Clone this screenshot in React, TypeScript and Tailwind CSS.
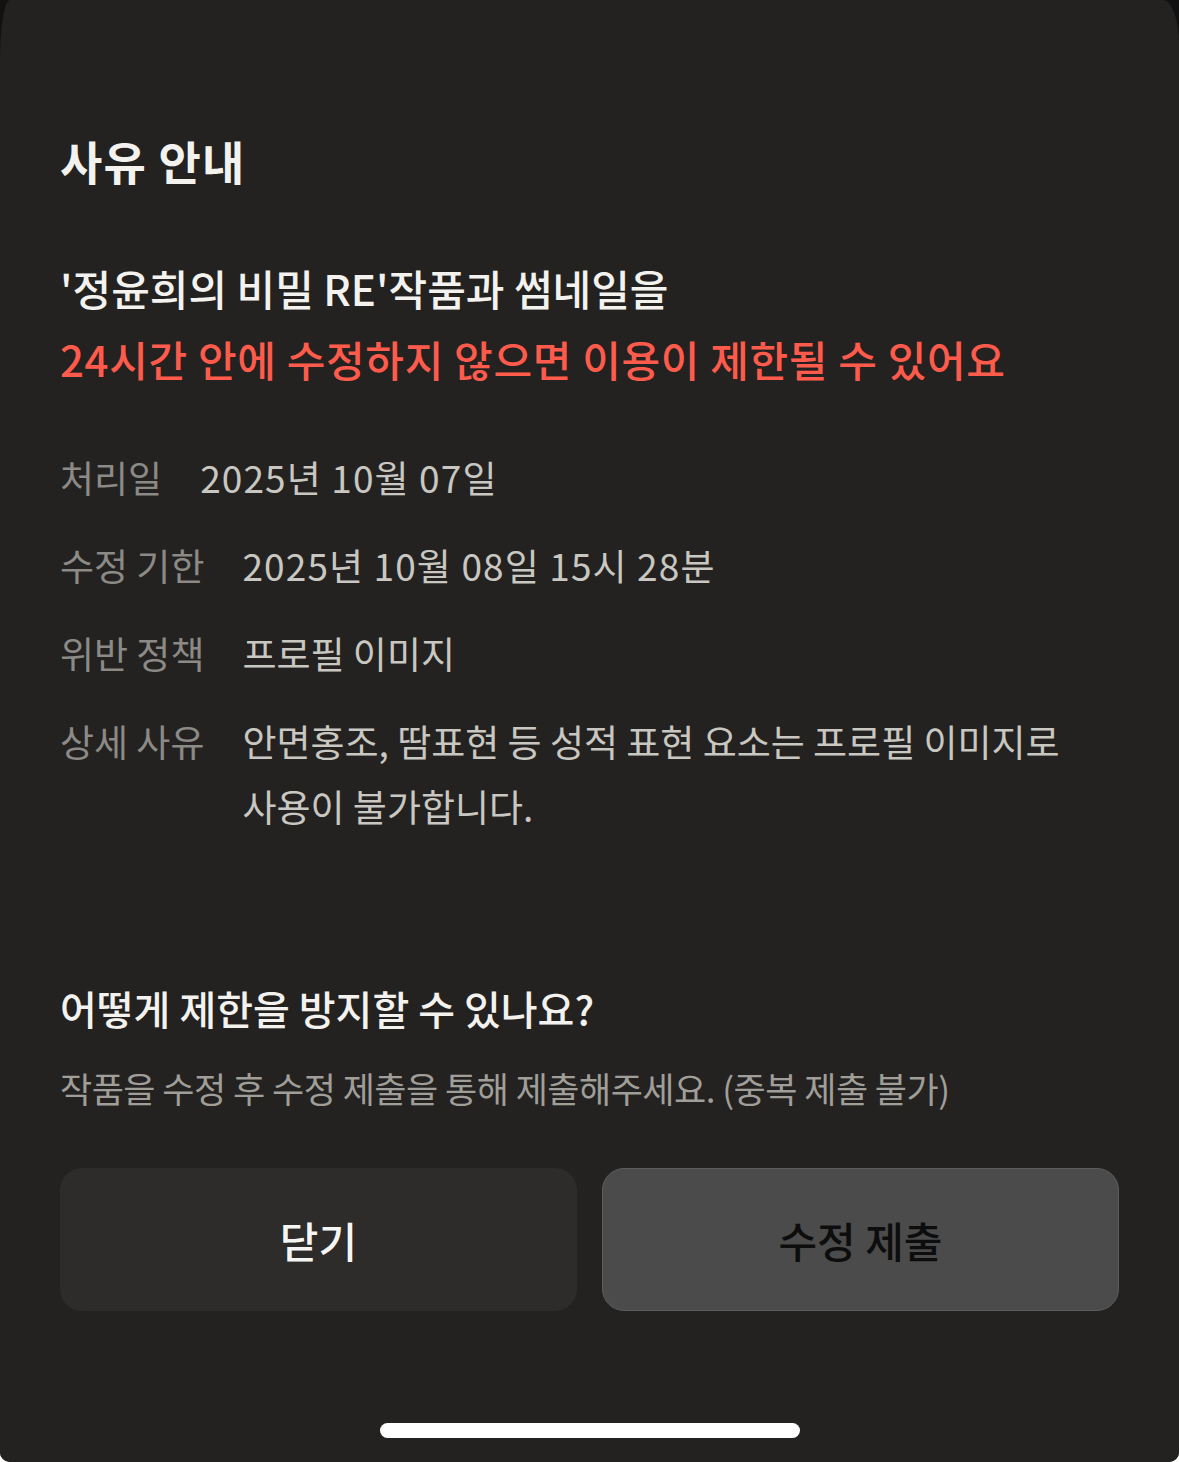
import React from "react";

const font = { fontFamily: '"Noto Sans CJK KR", "Noto Sans", sans-serif' };

function Row({ label, children, wide }: { label: string; children: React.ReactNode; wide?: boolean }) {
  return (
    <div className="flex gap-[38px] text-[37px] leading-[65px]">
      <div className="shrink-0 text-[#8b8a86]">{label}</div>
      <div className={wide ? "text-[#c9c7c1] tracking-[0.03em]" : "text-[#c9c7c1]"}>{children}</div>
    </div>
  );
}

export default function App() {
  return (
    <div className="bg-white w-[1179px] h-[1462px]" style={font}>
      <div className="bg-[#111111] h-full rounded-b-[10px] overflow-hidden">
        <div className="bg-[#232220] h-full rounded-tl-[10px_60px] rounded-tr-[16px_44px] flex flex-col px-[60px] pt-[130px]">
          <h1 className="text-[46px] leading-[60px] font-semibold text-[#f3f2ee] tracking-[0.025em]">사유 안내</h1>

          <div className="mt-[62px] text-[42px] leading-[71px] font-medium">
            <div className="text-[#f3f2ee]">'정윤희의 비밀 RE'작품과 썸네일을</div>
            <div className="text-[#ff5b4c] tracking-[0.016em]">24시간 안에 수정하지 않으면 이용이 제한될 수 있어요</div>
          </div>

          <div className="mt-[51px] flex flex-col gap-[23px]">
            <Row label="처리일" wide>2025년 10월 07일</Row>
            <Row label="수정 기한" wide>2025년 10월 08일 15시 28분</Row>
            <Row label="위반 정책">프로필 이미지</Row>
            <Row label="상세 사유">
              안면홍조, 땀표현 등 성적 표현 요소는 프로필 이미지로
              <br />
              사용이 불가합니다.
            </Row>
          </div>

          <h2 className="mt-[141px] text-[40px] leading-[56px] font-medium text-[#f3f2ee]">
            어떻게 제한을 방지할 수 있나요?
          </h2>
          <p className="mt-[27px] text-[35px] leading-[50px] text-[#a09e99] tracking-[-0.015em]">
            작품을 수정 후 수정 제출을 통해 제출해주세요. (중복 제출 불가)
          </p>

          <div className="mt-[55px] grid grid-cols-2 gap-[25px]">
            <button className="h-[143px] rounded-[22px] bg-[#2d2c2b] text-[42px] font-medium text-[#f5f5f3]">
              닫기
            </button>
            <button className="h-[143px] rounded-[22px] bg-[#4b4b4b] border border-[#5c5c5c] text-[42px] font-medium text-[#0d0d0d]">
              수정 제출
            </button>
          </div>

          <div className="mt-[112px] flex justify-center">
            <div className="w-[420px] h-[15px] rounded-full bg-white" />
          </div>
        </div>
      </div>
    </div>
  );
}
